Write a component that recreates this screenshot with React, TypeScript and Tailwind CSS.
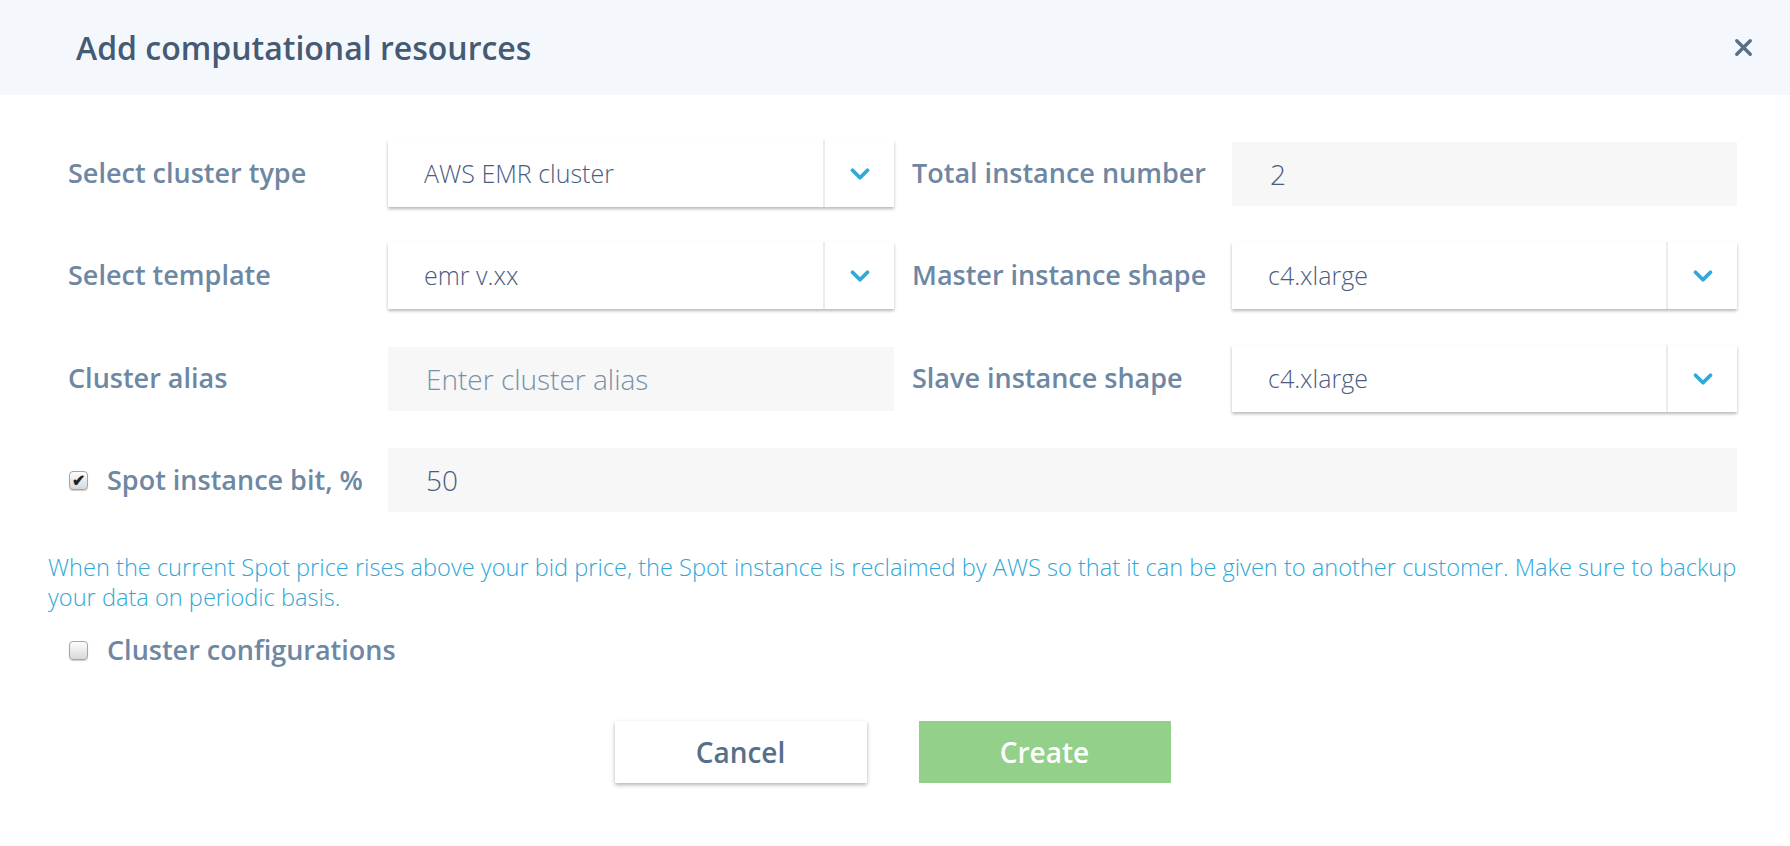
import { X, ChevronDown } from "lucide-react";

const font = { fontFamily: '"Open Sans", "Liberation Sans", sans-serif' };

function Select({ value }: { value: string }) {
  return (
    <div className="flex h-[67px] w-full bg-white shadow-[0_2px_3px_rgba(0,0,0,0.28)]">
      <div className="flex flex-1 items-center pl-[36px] text-[25px] font-light text-[#4a5d80]">{value}</div>
      <div className="flex w-[71px] items-center justify-center border-l-2 border-[#ececec]">
        <ChevronDown className="h-[30px] w-[30px] text-[#2eaad8]" strokeWidth={3} />
      </div>
    </div>
  );
}

function Field({ value, placeholder }: { value?: string; placeholder?: string }) {
  return (
    <div className="flex h-[64px] w-full items-center bg-[#f7f7f7] pl-[38px] text-[28px] font-light">
      {value ? <span className="text-[#4a5d80]">{value}</span> : <span className="text-[#7990ab]">{placeholder}</span>}
    </div>
  );
}

function Check({ checked }: { checked?: boolean }) {
  return (
    <span className="flex h-[19px] w-[19px] shrink-0 items-center justify-center rounded-[4px] border border-[#a5a5a5] bg-gradient-to-b from-[#fdfdfd] to-[#d8d8d8] shadow-[0_1px_1px_rgba(0,0,0,0.2)]">
      {checked && <span className="text-[16px] font-bold leading-none text-[#1f1f1f]">✔</span>}
    </span>
  );
}

const label = "text-[27px] font-semibold text-[#6e87a3] whitespace-nowrap";

export default function App() {
  return (
    <div className="h-[846px] w-[1790px] bg-white" style={font}>
      <div className="flex h-[95px] items-center justify-between bg-[#f4f8fd] pl-[76px] pr-[33px]">
        <h1 className="text-[32px] font-semibold text-[#455a73]">Add computational resources</h1>
        <X className="h-[27px] w-[27px] text-[#56718b]" strokeWidth={3} />
      </div>

      <div className="pl-[48px] pr-[53px] pt-[45px]">
        <div className="flex items-center">
          <div className={`w-[340px] pl-[20px] ${label}`}>Select cluster type</div>
          <div className="w-[506px]"><Select value="AWS EMR cluster" /></div>
          <div className={`ml-[18px] w-[320px] ${label}`}>Total instance number</div>
          <div className="flex-1"><Field value="2" /></div>
        </div>

        <div className="mt-[35px] flex items-center">
          <div className={`w-[340px] pl-[20px] ${label}`}>Select template</div>
          <div className="w-[506px]"><Select value="emr v.xx" /></div>
          <div className={`ml-[18px] w-[320px] ${label}`}>Master instance shape</div>
          <div className="flex-1"><Select value="c4.xlarge" /></div>
        </div>

        <div className="mt-[36px] flex items-center">
          <div className={`w-[340px] pl-[20px] ${label}`}>Cluster alias</div>
          <div className="w-[506px]"><Field placeholder="Enter cluster alias" /></div>
          <div className={`ml-[18px] w-[320px] ${label}`}>Slave instance shape</div>
          <div className="flex-1"><Select value="c4.xlarge" /></div>
        </div>

        <div className="mt-[36px] flex items-center">
          <div className="flex w-[340px] items-center gap-[19px] pl-[21px]">
            <Check checked />
            <span className={label}>Spot instance bit, %</span>
          </div>
          <div className="flex-1"><Field value="50" /></div>
        </div>

        <p className="mt-[40px] text-[23.6px] font-light leading-[30px] text-[#2fa8d8]">
          <span className="whitespace-nowrap">When the current Spot price rises above your bid price, the Spot instance is reclaimed by AWS so that it can be given to another customer. Make sure to backup</span>
          <br />
          your data on periodic basis.
        </p>

        <div className="mt-[18px] flex items-center gap-[19px] pl-[21px]">
          <Check />
          <span className={label}>Cluster configurations</span>
        </div>

        <div className="mt-[50px] flex justify-center gap-[52px]">
          <button className="h-[62px] w-[252px] bg-white text-[28px] font-semibold text-[#56708a] shadow-[0_2px_4px_rgba(0,0,0,0.3)]">Cancel</button>
          <button className="h-[62px] w-[252px] bg-[#93d08a] text-[28px] font-semibold text-white">Create</button>
        </div>
      </div>
    </div>
  );
}
